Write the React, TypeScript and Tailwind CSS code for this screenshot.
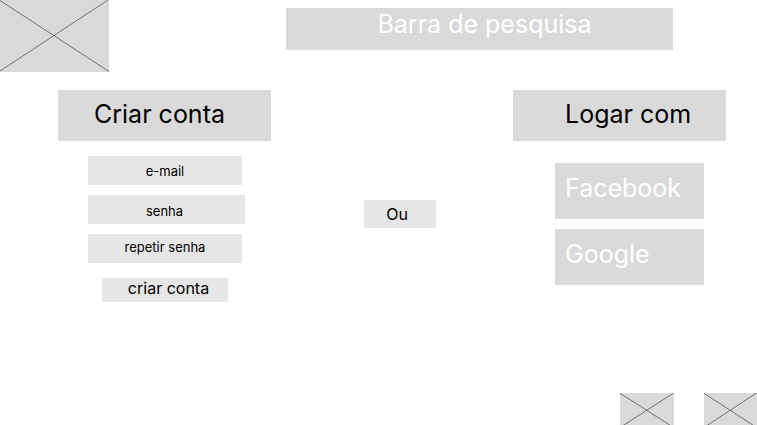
import React from 'react';

type PlaceholderProps = { className: string; label: string };

function ImagePlaceholder({ className, label }: PlaceholderProps) {
  return (
    <svg
      role="img"
      aria-label={label}
      viewBox="0 0 109 72"
      preserveAspectRatio="none"
      className={`block shrink-0 bg-[#d9d9d9] ${className}`}
    >
      <path
        d="M0 0.5 L109 71.5 M0 71 L108 0"
        stroke="#555555"
        strokeWidth="0.8"
        vectorEffect="non-scaling-stroke"
        fill="none"
      />
    </svg>
  );
}

type FieldProps = { label: string; type: string; className: string };

function Field({ label, type, className }: FieldProps) {
  return (
    <input
      type={type}
      aria-label={label}
      placeholder={label}
      className={`block h-[29px] bg-[#e6e6e6] text-center text-[13px] placeholder:text-black placeholder:opacity-100 outline-none ${className}`}
    />
  );
}

export default function App() {
  return (
    <div className="flex min-h-screen flex-col bg-white font-['Inter',sans-serif] text-black">
      <header className="flex items-start">
        <ImagePlaceholder label="Logo" className="h-[72px] w-[109px]" />
        <input
          type="text"
          aria-label="Barra de pesquisa"
          placeholder="Barra de pesquisa"
          className="mt-2 mr-[84px] ml-[177px] h-[42px] min-w-0 flex-1 bg-[#d9d9d9] pb-[10px] pl-[10px] text-center text-[25px] leading-[30px] text-white outline-none placeholder:text-white placeholder:opacity-100"
        />
      </header>

      <main className="mt-[18px] grid grid-cols-[213px_1fr_213px] items-start pr-[31px] pl-[58px]">
        <form>
          <h1 className="flex h-[51px] items-center justify-center bg-[#d9d9d9] pr-[10px] pb-[2px] text-[25px]">
            Criar conta
          </h1>
          <div className="mt-[15px] flex flex-col items-start gap-[10px] pl-[30px]">
            <Field label="e-mail" type="email" className="w-[154px]" />
            <Field label="senha" type="password" className="w-[157px] pt-[2px] pr-1" />
            <Field label="repetir senha" type="password" className="w-[154px] pb-1" />
          </div>
          <button
            type="button"
            className="mx-auto mt-[15px] flex h-6 w-[126px] items-center justify-center bg-[#e6e6e6] pb-1 pl-2 text-[16px]"
          >
            criar conta
          </button>
        </form>

        <div className="mt-[110px] flex justify-center pl-4">
          <p className="flex h-7 w-[72px] items-center justify-center bg-[#e6e6e6] pr-[6px] text-[16px]">Ou</p>
        </div>

        <section>
          <h2 className="flex h-[51px] items-center bg-[#d9d9d9] pb-[2px] pl-[52px] text-[25px]">Logar com</h2>
          <div className="mt-[22px] flex flex-col gap-[10px] pr-[22px] pl-[42px]">
            <button type="button" className="flex h-14 items-center bg-[#d9d9d9] pb-1 pl-[10px] text-[25px] text-white">
              Facebook
            </button>
            <button type="button" className="flex h-14 items-center bg-[#d9d9d9] pb-1 pl-[10px] text-[25px] text-white">
              Google
            </button>
          </div>
        </section>
      </main>

      <footer className="mt-auto flex h-8 justify-end gap-[30px] overflow-hidden">
        <ImagePlaceholder label="Imagem" className="h-[35px] w-[54px]" />
        <ImagePlaceholder label="Imagem" className="h-[35px] w-[53px]" />
      </footer>
    </div>
  );
}
